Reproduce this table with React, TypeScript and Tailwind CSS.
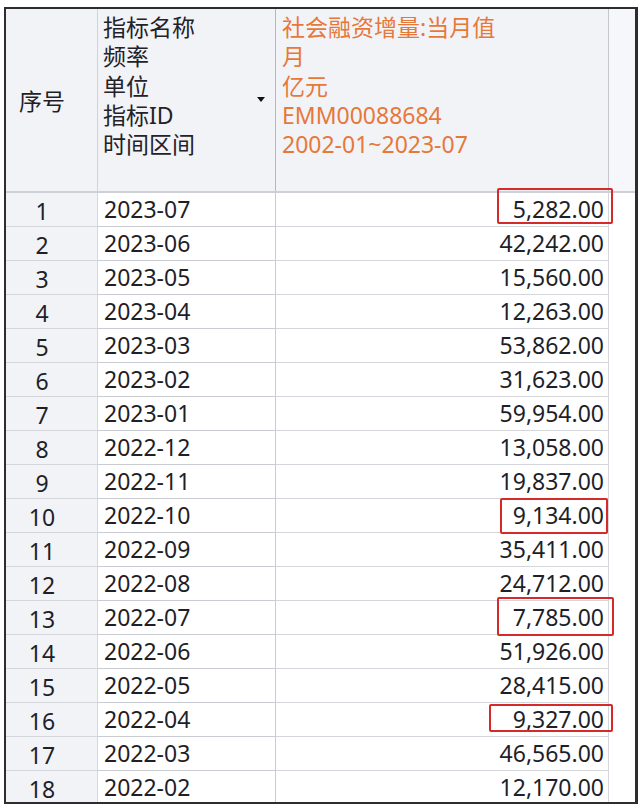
import React from "react";

// 指标数据（月度）
const rows: [string, string][] = [
  ["2023-07", "5,282.00"],
  ["2023-06", "42,242.00"],
  ["2023-05", "15,560.00"],
  ["2023-04", "12,263.00"],
  ["2023-03", "53,862.00"],
  ["2023-02", "31,623.00"],
  ["2023-01", "59,954.00"],
  ["2022-12", "13,058.00"],
  ["2022-11", "19,837.00"],
  ["2022-10", "9,134.00"],
  ["2022-09", "35,411.00"],
  ["2022-08", "24,712.00"],
  ["2022-07", "7,785.00"],
  ["2022-06", "51,926.00"],
  ["2022-05", "28,415.00"],
  ["2022-04", "9,327.00"],
  ["2022-03", "46,565.00"],
  ["2022-02", "12,170.00"],
];

// red marks drawn over some rows
const marks: Record<number, string> = {
  1: "top-[-5px] left-[491px] w-[116px] h-[36px]",
  10: "top-[-1px] left-[494px] w-[108px] h-[36px]",
  13: "top-[-4px] left-[491px] w-[117px] h-[39px]",
  16: "top-[1px] left-[483px] w-[124px] h-[28px]",
};

const App = () => {
  return (
    <div className="min-h-screen bg-white pt-[7px] pl-[4px] text-[23px] text-[#1e1f28] [font-family:'Noto_Sans','Noto_Sans_CJK_SC',sans-serif]">
      <div className="w-[634px] h-[797px] border-2 border-r-[3px] border-[#2d2d2f] overflow-hidden">
        {/* header */}
        <div className="flex h-[184px] border-b-2 border-[#cdd0d6] bg-[#f2f3f7]">
          <div className="w-[92px] border-r border-[#cfd2d8] flex items-center justify-center pr-[19px] pt-[2px]">
            序号
          </div>
          <div className="w-[178px] relative border-r border-[#b4b8c0] pl-[5px] pt-[4px] leading-[29.3px] text-[#222228]">
            <div>指标名称</div>
            <div>频率</div>
            <div>单位</div>
            <div>指标ID</div>
            <div>时间区间</div>
            <span className="absolute left-[159px] top-[88px] w-0 h-0 border-l-4 border-r-4 border-t-[5px] border-l-transparent border-r-transparent border-t-[#111]" />
          </div>
          <div className="w-[333px] border-r border-[#c4c7ce] pl-[6px] pt-[4px] leading-[29.3px] text-[#e6783a]">
            <div>社会融资增量:当月值</div>
            <div>月</div>
            <div>亿元</div>
            <div>EMM00088684</div>
            <div>2002-01~2023-07</div>
          </div>
          <div className="flex-1 bg-[#f6f7fa]" />
        </div>

        {/* rows */}
        {rows.map(([date, value], i) => (
          <div key={date} className="relative flex h-[34px]">
            <div className="w-[92px] bg-[#f2f3f7] border-r border-b border-[#d4d6dc] flex items-center justify-center pr-[19px] pt-[3px]">
              {i + 1}
            </div>
            <div className="w-[178px] border-r border-b border-[#c9ccd2] pl-[6px] flex items-center">
              {date}
            </div>
            <div className="w-[333px] border-r border-b border-[#d4d6dc] pr-[4px] flex items-center justify-end">
              {value}
            </div>
            <div className="flex-1 bg-white" />
            {marks[i + 1] && (
              <span
                className={`absolute z-10 border-2 border-[#d62a2a] rounded-[2px] ${marks[i + 1]}`}
              />
            )}
          </div>
        ))}
      </div>
    </div>
  );
};

export default App;
